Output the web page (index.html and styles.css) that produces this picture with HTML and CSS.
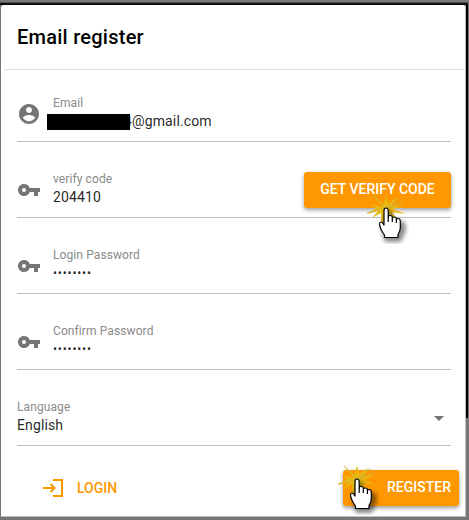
FILE: index.html
```html
<!DOCTYPE html>
<html lang="en">
<head>
<meta charset="utf-8">
<title>Email register</title>
<link rel="stylesheet" href="styles.css">
</head>
<body>
<svg class="defs" width="0" height="0" aria-hidden="true">
  <defs>
    <symbol id="key" viewBox="0 0 24 24"><path d="M12.65 10A5.99 5.99 0 0 0 7 6c-3.31 0-6 2.69-6 6s2.69 6 6 6a5.99 5.99 0 0 0 5.65-4H17v4h4v-4h2v-4H12.65zM7 14c-1.1 0-2-.9-2-2s.9-2 2-2 2 .9 2 2-.9 2-2 2z"/></symbol>
    <symbol id="pointer" viewBox="0 0 44 52">
      <path class="burst" d="M17 15 8 5l10 7L20 2l2 10 9-7-5 9 12-1-11 4 13 5-14-2 5 7-10-6-6 13 0-13-9 5 6-7-11 3 9-6L4 12z"/>
      <path class="burst-line" d="M20 16 1 21M20 16 7 3M20 16 33 6M20 16l17-6"/>
      <path class="shade" d="M21 19c2-2 5-1 5 2v6l13 3 1 8-5 12H19l-4-13z"/>
      <path class="hand" d="M18 32V18.500q0-2.500 2-2.500t2.200 2.500V25q0-1.500 2-1.500t2.100 1.500v1q0-1 2-1t2.100 1.500v1q0-1 1.800-1t2.100 2.500v7q0 3-2.300 6.500v3H18.500V43Q14 37 13.500 32q0-2 1.500-2t3 3z"/>
      <path class="fingers" d="M22.200 25v5M26.300 26v4M30.400 27v4"/>
    </symbol>
  </defs>
</svg>
<main class="dialog">
  <header class="header"><h1>Email register</h1></header>
  <form class="form">
    <div class="row first">
      <svg class="icon" viewBox="0 0 24 24"><path d="M12 2C6.480 2 2 6.480 2 12s4.480 10 10 10 10-4.480 10-10S17.520 2 12 2zm0 3c1.660 0 3 1.340 3 3s-1.340 3-3 3-3-1.340-3-3 1.340-3 3-3zm0 14.200c-2.500 0-4.710-1.280-6-3.220.030-1.990 4-3.080 6-3.080 1.990 0 5.970 1.090 6 3.080-1.290 1.940-3.500 3.220-6 3.220z"/></svg>
      <div class="field"><span class="label">Email</span><span class="value email"><span class="redacted"></span><span class="address">4@gmail.com</span></span></div>
    </div>
    <div class="row">
      <svg class="icon"><use href="#key"/></svg>
      <div class="field"><span class="label">verify code</span><span class="value">204410</span></div>
      <div class="button verify">GET VERIFY CODE<svg class="pointer"><use href="#pointer"/></svg></div>
    </div>
    <div class="row">
      <svg class="icon"><use href="#key"/></svg>
      <div class="field"><span class="label">Login Password</span><span class="value dots">••••••••</span></div>
    </div>
    <div class="row">
      <svg class="icon"><use href="#key"/></svg>
      <div class="field"><span class="label">Confirm Password</span><span class="value dots">••••••••</span></div>
    </div>
    <div class="row">
      <div class="field"><span class="label">Language</span><span class="value">English</span></div>
      <svg class="arrow" viewBox="0 0 10 5"><path d="M0 0h10L5 5z"/></svg>
    </div>
  </form>
  <footer class="footer">
    <div class="login"><svg viewBox="0 0 24 24"><path d="M12 4h9v16h-9M2 12h11M9.500 8l4 4-4 4"/></svg><span>LOGIN</span></div>
    <div class="button register">REGISTER<svg class="pointer"><use href="#pointer"/></svg></div>
  </footer>
</main>
</body>
</html>
```

FILE: styles.css
```css
* { box-sizing: border-box; }
body {
  margin: 0;
  width: 469px;
  height: 520px;
  padding: 5px 3px 3px 1px;
  overflow: hidden;
  background: linear-gradient(#77797b 0 2px, #1d1e22 3px, #000 5px, transparent 5px) 0 0 / 468px 5px no-repeat,
    linear-gradient(90deg, transparent 466px, #000 466px 468px, #777 468px) 0 0 / 469px 418px no-repeat,
    #777;
  font-family: Roboto, sans-serif;
  color: rgba(0, 0, 0, .87);
}
.defs { position: absolute; }
.dialog {
  height: 512px;
  background: #fff;
  border-right: 1px solid #bbb;
  border-bottom: 1px solid #bbb;
  border-radius: 3px 3px 0 0;
}
.header {
  height: 65px;
  margin-left: 3px;
  padding: 20px 13px 0;
  border-bottom: 1px solid #e0e0e0;
}
h1 { margin: 0; font-size: 20px; line-height: 24px; font-weight: 500; letter-spacing: .25px; color: #000; }
.form { padding: 0 14px 0 16px; }
.row {
  display: flex;
  height: 76px;
  padding-top: 30px;
  border-bottom: 1px solid #bdbdbd;
}
.row.first { height: 72px; padding-top: 26px; }
.icon { width: 24px; height: 24px; margin: 6px 12px 0 0; fill: #757575; flex: none; }
.field { display: flex; flex-direction: column; flex: 1; }
.label { font-size: 12px; line-height: 14px; color: #8a8a8a; letter-spacing: .1px; }
.value { font-size: 14px; line-height: 20px; letter-spacing: .13px; margin-top: 1px; }
.email { display: flex; margin-left: -6px; }
.redacted { width: 83px; height: 16px; margin-top: 3px; background: #000; flex: none; z-index: 1; }
.address { margin-left: -6px; }
.dots { font-size: 12px; letter-spacing: .8px; line-height: 21px; }
.arrow { width: 10px; height: 5px; fill: #757575; margin: 16px 7px 0 0; }
.button {
  position: relative;
  height: 36px;
  background: #ff9800;
  color: #fff;
  border-radius: 3px;
  font-size: 14px;
  line-height: 35px;
  font-weight: 500;
  text-align: center;
  flex: none;
  box-shadow: 0 2px 4px rgba(0, 0, 0, .4);
}
.verify { width: 147px; }
.footer { display: flex; justify-content: space-between; padding: 24px 6px 0 40px; }
.login { display: flex; align-items: center; height: 35px; color: #ff9800; font-size: 14px; font-weight: 500; }
.login svg { width: 24px; height: 24px; margin: 1px 12px 0 0; fill: none; stroke: #ff9800; stroke-width: 2; }
.register { width: 116px; text-align: right; padding-right: 8px; }
.pointer { position: absolute; width: 44px; height: 52px; }
.verify .pointer { left: 62px; top: 20px; }
.register .pointer { left: -6px; top: -7px; }
.burst { fill: #e8b813; }
.burst-line { stroke: #ceb336; stroke-width: 1; fill: none; }
.shade { fill: #000; opacity: .45; filter: blur(2px); }
.hand { fill: #fff; stroke: #000; stroke-width: 1.200; stroke-linejoin: round; }
.fingers { stroke: #000; stroke-width: 1.200; fill: none; }
```
